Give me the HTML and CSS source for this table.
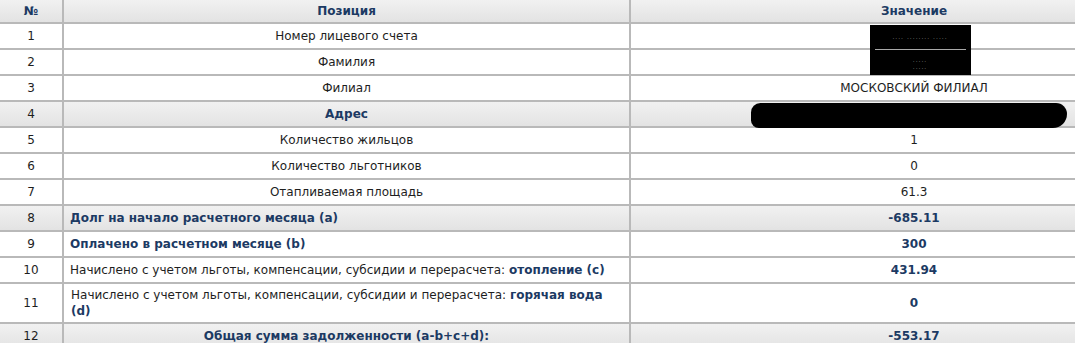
FILE: index.html
```html
<!DOCTYPE html>
<html lang="ru">
<head>
<meta charset="utf-8">
<title>Задолженность</title>
<link rel="stylesheet" href="styles.css">
</head>
<body>
<table class="grid">
  <colgroup>
    <col class="c-num">
    <col class="c-pos">
    <col class="c-val">
  </colgroup>
  <tr class="shade head">
    <th>№</th>
    <th>Позиция</th>
    <th>Значение</th>
  </tr>
  <tr>
    <td class="num">1</td>
    <td class="center">Номер лицевого счета</td>
    <td class="center"><span class="redact r-top"><span class="dots">.... ........ .....</span></span></td>
  </tr>
  <tr>
    <td class="num">2</td>
    <td class="center">Фамилия</td>
    <td class="center"><span class="redact r-bot"><span class="dots">.....<br>.....</span></span></td>
  </tr>
  <tr>
    <td class="num">3</td>
    <td class="center">Филиал</td>
    <td class="center">МОСКОВСКИЙ ФИЛИАЛ</td>
  </tr>
  <tr class="shade">
    <td class="num">4</td>
    <td class="center strong">Адрес</td>
    <td class="center"><span class="blob"></span></td>
  </tr>
  <tr>
    <td class="num">5</td>
    <td class="center">Количество жильцов</td>
    <td class="center">1</td>
  </tr>
  <tr>
    <td class="num">6</td>
    <td class="center">Количество льготников</td>
    <td class="center">0</td>
  </tr>
  <tr>
    <td class="num">7</td>
    <td class="center">Отапливаемая площадь</td>
    <td class="center">61.3</td>
  </tr>
  <tr class="shade">
    <td class="num">8</td>
    <td class="left strong">Долг на начало расчетного месяца (a)</td>
    <td class="center strong">-685.11</td>
  </tr>
  <tr>
    <td class="num">9</td>
    <td class="left strong">Оплачено в расчетном месяце (b)</td>
    <td class="center strong">300</td>
  </tr>
  <tr>
    <td class="num">10</td>
    <td class="left">Начислено с учетом льготы, компенсации, субсидии и перерасчета: <b class="strong">отопление (c)</b></td>
    <td class="center strong">431.94</td>
  </tr>
  <tr>
    <td class="num">11</td>
    <td class="left wrap">Начислено с учетом льготы, компенсации, субсидии и перерасчета: <b class="strong">горячая вода (d)</b></td>
    <td class="center strong">0</td>
  </tr>
  <tr class="shade">
    <td class="num">12</td>
    <td class="center strong">Общая сумма задолженности (a-b+c+d):</td>
    <td class="center strong">-553.17</td>
  </tr>
</table>
</body>
</html>
```

FILE: styles.css
```css
html, body {
  margin: 0;
  padding: 0;
  background: #ffffff;
  overflow: hidden;
}

body {
  font-family: "DejaVu Sans", Verdana, sans-serif;
  font-size: 12px;
  color: #1e1e1e;
}

.grid {
  border-collapse: collapse;
  width: 1198px;
  table-layout: fixed;
}

.c-num { width: 63px; }
.c-pos { width: 567px; }
.c-val { width: 568px; }

.grid th,
.grid td {
  border: 2px solid #b9b9b9;
  padding: 5px 6px 4px;
  line-height: 15px;
  vertical-align: middle;
}

.grid tr:first-child th { border-top: none; }
.grid th:first-child,
.grid td:first-child { border-left: none; }

.grid th {
  font-weight: bold;
  color: #1c3a63;
  text-align: center;
  padding-top: 4px;
  padding-bottom: 3px;
}

.shade th,
.shade td {
  background: linear-gradient(#f1f1f1, #e3e3e3);
}

.num { text-align: center; }
.center { text-align: center; }
.left { text-align: left; padding-left: 9px; }

.strong {
  font-weight: bold;
  color: #1c3a63;
}

.grid td.wrap {
  padding-left: 7px;
  padding-top: 3px;
  padding-bottom: 3px;
  line-height: 16px;
}

.redact {
  display: inline-block;
  position: relative;
  background: #000;
  width: 101px;
  vertical-align: top;
  color: #8a8a8a;
  font-size: 6px;
  line-height: 7px;
  box-sizing: border-box;
}

.r-top {
  height: 26px;
  margin: -4px 0 -7px 12px;
}

.r-top::after {
  content: "";
  position: absolute;
  left: 5px;
  right: 5px;
  bottom: 0;
  height: 2px;
  background: #a9a9a9;
}

.r-bot {
  height: 25px;
  margin: -5px 0 -5px 12px;
  padding-top: 4px;
}

.dots { display: block; padding-top: 8px; letter-spacing: 1px; }
.r-bot .dots { padding-top: 2px; }

.blob {
  display: inline-block;
  width: 316px;
  height: 25px;
  background: #000;
  border-radius: 12px 14px 18px 10px;
  margin: -4px 0 -6px 0;
  vertical-align: top;
  position: relative;
  left: -5px;
}
```
